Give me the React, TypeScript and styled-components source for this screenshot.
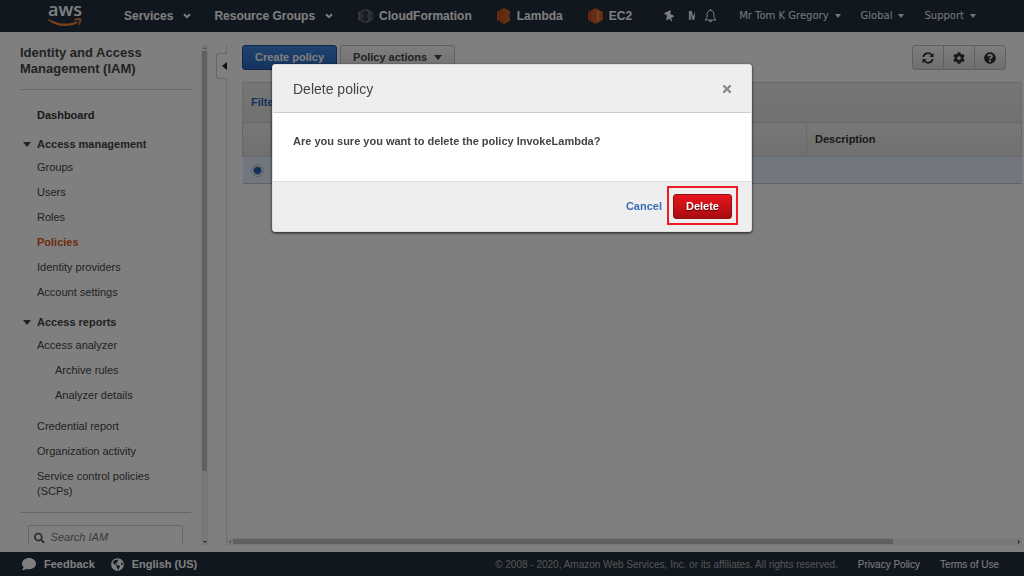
import React from "react";
import styled, { createGlobalStyle, css } from "styled-components";
import {
  FaCog,
  FaComment,
  FaGlobeAmericas,
  FaQuestionCircle,
  FaSearch,
  FaThumbtack,
  FaTimes,
} from "react-icons/fa";

const sans = `"Liberation Sans", Arial, Helvetica, sans-serif`;

const GlobalStyle = createGlobalStyle`
  * { box-sizing: border-box; }
  body {
    margin: 0;
    background: #fff;
    color: #444;
    font: 11px/15px ${sans};
  }
  button, input { font: inherit; color: inherit; }
  a { color: inherit; text-decoration: none; }
  ul { list-style: none; margin: 0; padding: 0; }
`;

const Shell = styled.div`
  display: grid;
  grid-template-rows: 32px minmax(0, 1fr) 24px;
  height: 100vh;
`;

/* ---------- top navigation ---------- */

const TopBar = styled.header`
  display: flex;
  align-items: center;
  background: #232f3e;
  color: #fff;
  white-space: nowrap;
`;

const Logo = styled.a`
  display: flex;
  flex-direction: column;
  align-items: center;
  align-self: flex-start;
  width: 34px;
  margin: 0 42px 0 48px;
  font: 600 18px/18px "Open Sans", sans-serif;
`;

const plainButton = css`
  display: flex;
  align-items: center;
  padding: 0;
  border: 0;
  background: none;
  cursor: pointer;
`;

const NavButton = styled.button`
  ${plainButton}
  gap: 10px;
  margin-right: 23px;
  font-size: 12px;
  font-weight: bold;
`;

const Shortcuts = styled.nav`
  display: flex;
  flex: 1;
  gap: 25px;
  margin-left: 2px;
`;

const Shortcut = styled.a`
  display: flex;
  align-items: center;
  gap: 6px;
  font-size: 12px;
  font-weight: bold;
`;

const Tools = styled.div`
  display: flex;
  align-items: center;
  gap: 9px;
  margin-right: 22px;
`;

const ClippedShortcut = styled.a`
  width: 7px;
  margin-left: 4px;
  overflow: hidden;
  font-size: 12px;
  font-weight: bold;
`;

const IconButton = styled.button`
  ${plainButton}
`;

const Account = styled.nav`
  display: flex;
  gap: 20px;
  margin-right: 48px;
`;

const AccountButton = styled.button`
  ${plainButton}
  gap: 6px;
  font: 10px/14px "DejaVu Sans", Verdana, sans-serif;
  color: #eee;
`;

const Caret = styled.span<{ $size?: number }>`
  border: ${(p) => p.$size ?? 3}px solid transparent;
  border-top: ${(p) => (p.$size ?? 3) + 1}px solid currentColor;
  border-bottom: 0;
`;

const TiltedPin = styled(FaThumbtack)`
  transform: rotate(-25deg);
`;

/* ---------- side navigation ---------- */

const Workspace = styled.div`
  display: grid;
  grid-template-columns: 208px 19px minmax(0, 1fr);
  padding: 13px 2px 7px 0;
  min-height: 0;
`;

const SideColumn = styled.aside`
  display: grid;
  grid-template-columns: minmax(0, 1fr) 7px;
  min-height: 0;
`;

const SideContent = styled.div`
  padding: 0 10px 0 20px;
  overflow: hidden;
`;

const SideTitle = styled.h1`
  margin: 0;
  padding-bottom: 12px;
  border-bottom: 1px solid #ccc;
  font-size: 13px;
  line-height: 16px;
`;

const SideNav = styled.nav`
  padding: 14px 0 8px;
  border-bottom: 1px solid #ccc;
`;

const Heading = styled.a`
  display: flex;
  align-items: center;
  height: 23px;
  padding-left: 17px;
  font-weight: bold;
  color: #333;
`;

const GroupToggle = styled.button`
  ${plainButton}
  gap: 6px;
  width: 100%;
  height: 22px;
  margin-top: 6px;
  padding-left: 3px;
  font-weight: bold;
`;

const List = styled.ul`
  margin-bottom: 6px;
  &:last-child { margin-bottom: 0; }
`;

const Entry = styled.a<{ $nested?: boolean; $active?: boolean }>`
  display: block;
  padding: 5px 20px 5px ${(p) => (p.$nested ? 35 : 17)}px;
  color: ${(p) => (p.$active ? "#e1571e" : "inherit")};
  font-weight: ${(p) => (p.$active ? "bold" : "normal")};
`;

const SearchBox = styled.label`
  display: flex;
  align-items: center;
  gap: 6px;
  height: 25px;
  margin: 12px 8px 0;
  padding: 0 5px;
  border: 1px solid #ccc;
  border-radius: 2px;
  color: #555;
`;

const SearchInput = styled.input`
  width: 100%;
  min-width: 0;
  padding: 0;
  border: 0;
  outline: 0;
  background: none;
  &::placeholder { color: #777; font-style: italic; opacity: 1; }
`;

/* ---------- scroll bars ---------- */

const Track = styled.div<{ $horizontal?: boolean }>`
  display: flex;
  flex-direction: ${(p) => (p.$horizontal ? "row" : "column")};
  align-items: center;
  justify-content: space-between;
  background: #f1f1f1;
  ${(p) => (p.$horizontal ? "height: 7px;" : "")}
`;

const Thumb = styled.div<{ $horizontal?: boolean; $share: number }>`
  background: #c1c1c1;
  ${(p) =>
    p.$horizontal
      ? css`width: ${p.$share}%; height: 5px; margin-right: auto;`
      : css`height: ${p.$share}%; width: 5px; margin-bottom: auto;`}
`;

const arrows = {
  up: "M3 2 5 4H1z",
  down: "M3 4 5 2H1z",
  left: "M2 3 4 1V5z",
  right: "M4 3 2 1V5z",
};

function Arrow({ to, dim }: { to: keyof typeof arrows; dim?: boolean }) {
  return (
    <svg width="6" height="6" viewBox="0 0 6 6" fill={dim ? "#a3a3a3" : "#505050"}>
      <path d={arrows[to]} />
    </svg>
  );
}

/* ---------- main panel ---------- */

const Splitter = styled.div`
  display: flex;
  flex-direction: column;
  align-items: flex-end;
  &::before { content: ""; height: 8px; border-right: 1px solid #ddd; }
  &::after { content: ""; flex: 1; border-right: 1px solid #ddd; }
`;

const Collapse = styled.button`
  ${plainButton}
  justify-content: flex-end;
  width: 11px;
  height: 26px;
  border: 1px solid #ccc;
  border-right: 0;
  border-radius: 3px 0 0 3px;
  color: #222;
`;

const Main = styled.main`
  display: flex;
  flex-direction: column;
  min-width: 0;
`;

const Content = styled.div`
  flex: 1;
  padding-left: 15px;
`;

const Toolbar = styled.div`
  display: flex;
  gap: 3px;
  margin-bottom: 12px;
`;

const Button = styled.button<{ $tone?: "primary" | "danger" }>`
  ${plainButton}
  gap: 7px;
  height: 25px;
  padding: 0 12px;
  border: 1px solid #c0c0c0;
  border-radius: 3px;
  background: linear-gradient(#fcfcfc, #e4e4e4);
  font-weight: bold;
  ${(p) =>
    p.$tone === "primary" &&
    css`
      border-color: #1f5291;
      background: linear-gradient(#3f84de, #2a69be);
      color: #fff;
    `}
  ${(p) =>
    p.$tone === "danger" &&
    css`
      border-color: #8c1010;
      background: linear-gradient(#e8141c, #a80c10);
      color: #fff;
      text-shadow: 0 1px 1px #500;
    `}
`;

const ButtonGroup = styled.div`
  display: flex;
  margin: 0 16px 0 auto;
`;

const GroupButton = styled.button`
  ${plainButton}
  justify-content: center;
  width: 32px;
  height: 25px;
  border: 1px solid #c0c0c0;
  background: linear-gradient(#fcfcfc, #dedede);
  color: #333;
  & + & { margin-left: -1px; }
  &:first-child { border-radius: 3px 0 0 3px; }
  &:last-child { border-radius: 0 3px 3px 0; }
`;

const FilterBar = styled.div`
  display: flex;
  align-items: center;
  height: 40px;
  padding: 0 8px;
  border: 1px solid #d4d4d4;
  border-bottom: 0;
  background: linear-gradient(#ececec, #e1e1df);
`;

const FilterButton = styled.button`
  ${plainButton}
  gap: 6px;
  color: #2663b8;
  font-weight: bold;
`;

const Table = styled.table`
  width: 100%;
  table-layout: fixed;
  border-collapse: collapse;
`;

const HeadCell = styled.th`
  height: 34px;
  padding: 0 8px;
  border: 1px solid #d0d0d0;
  background: linear-gradient(#f0f0ee, #dfdfdd);
  text-align: left;
  color: #333;
`;

const Cell = styled.td`
  height: 27px;
  padding: 0;
  border-bottom: 1px solid #bcc4d0;
  background: #e4efff;
  text-align: center;
`;

const Radio = styled.input`
  display: block;
  appearance: none;
  width: 13px;
  height: 13px;
  margin: 0 auto;
  border: 1px solid #bbb;
  border-radius: 50%;
  background: radial-gradient(circle, #2160b8 3px, #f8f8f8 5px);
`;

/* ---------- footer ---------- */

const Footer = styled.footer`
  display: flex;
  align-items: center;
  gap: 20px;
  padding: 0 25px 0 22px;
  background: #232f3e;
  color: #fff;
  font-size: 10px;
`;

const FooterButton = styled.button`
  ${plainButton}
  gap: 8px;
  margin-right: -4px;
  font-size: 11px;
  font-weight: bold;
`;

const Copyright = styled.span`
  margin-left: auto;
  color: #aaa;
`;

/* ---------- dialog ---------- */

const Backdrop = styled.div`
  position: fixed;
  inset: 0;
  display: flex;
  align-items: flex-start;
  justify-content: center;
  padding-top: 64px;
  background: rgba(0, 0, 0, 0.5);
`;

const Dialog = styled.section`
  width: 480px;
  max-width: 100%;
  border: 1px solid #ddd;
  border-radius: 3px;
  background: #fff;
  box-shadow: 0 1px 3px rgba(0, 0, 0, 0.8);
  overflow: hidden;
`;

const DialogHead = styled.header`
  display: flex;
  align-items: center;
  justify-content: space-between;
  height: 48px;
  padding: 0 18px 0 20px;
  border-bottom: 1px solid #ccc;
  background: #eee;
`;

const DialogTitle = styled.h2`
  margin: 0;
  font-size: 14px;
  line-height: 18px;
  font-weight: normal;
`;

const CloseButton = styled(IconButton)`
  color: #888;
`;

const Question = styled.p`
  margin: 0;
  padding: 21px 20px 32px;
  font-weight: bold;
`;

const DialogFoot = styled.footer`
  display: flex;
  align-items: center;
  justify-content: flex-end;
  gap: 5px;
  height: 50px;
  padding-right: 13px;
  border-top: 1px solid #ddd;
  background: #eee;
`;

const CancelButton = styled.button`
  ${plainButton}
  color: #3a6cb8;
  font-weight: bold;
`;

const Highlight = styled.div`
  margin-bottom: 2px;
  padding: 6px 4px 4px;
  border: 2px solid #ed1c24;
`;

/* ---------- drawings ---------- */

const Smile = () => (
  <svg width="34" height="9" viewBox="0 0 34 9" fill="#f58536">
    <path d="M.5 .9C10 6.500 21 6.800 29 3.300L30 4.800C21 10 8 8.700.2 2.200z" />
    <path d="M26 1.500C28.500-.2 32.500.2 33.200.9 33.700 2 32.700 5.500 30.700 7.500L30 7.200C31 5.200 31.800 3 31.400 2.400 30.700 1.900 28 2 26.100 2.400z" />
  </svg>
);

const Chevron = () => (
  <svg width="8" height="6" viewBox="0 0 8 6" fill="none" stroke="currentColor" strokeWidth="2">
    <path d="M1 1.200 4 4.200 7 1.200" />
  </svg>
);

const CloudFormationIcon = () => (
  <svg width="15" height="16" viewBox="0 0 15 16">
    <path d="M0 4 2.200 3V13L0 12z" fill="#6d7278" />
    <path d="M2.200 3 7 .5V3.200L4.800 4.300V11.700L7 12.800V15.500L2.200 13z" fill="#565c64" />
    <path d="M8 .5 12.800 3V13L8 15.500V12.800L10.200 11.700V4.300L8 3.200z" fill="#656a72" />
    <path d="M12.800 3 15 4V12L12.800 13z" fill="#555a62" />
    <path d="M6 6V10M9 6V10" stroke="#7a5148" />
  </svg>
);

const LambdaIcon = () => (
  <svg width="14" height="16" viewBox="0 0 14 16">
    <path d="M0 4 7 0V16L0 12z" fill="#cf5a24" />
    <path d="M7 0 13 3.200V6.800L11 6V10L13 9.200V12.800L7 16z" fill="#e0662b" />
    <path d="M2.500 4V13M4.800 3V14M7.200 2V15M9.400 3V13" stroke="#7a3a20" strokeWidth=".9" strokeDasharray="1 1" />
    <path d="M11 7 13 7.600V8.600L11 9.200z" fill="#cf5a24" />
  </svg>
);

const Ec2Icon = () => (
  <svg width="15" height="16" viewBox="0 0 15 16">
    <path d="M0 4 2.500 2.800V13.200L0 12z" fill="#c9531f" />
    <path d="M2.500 2.800 7.500 0V16L2.500 13.200z" fill="#d96028" />
    <path d="M7.500 0 12.500 2.800V13.200L7.500 16z" fill="#e0662b" />
    <path d="M12.500 2.800 15 4V12L12.500 13.200z" fill="#c9531f" />
    <path d="M2.600 3V13M5 3V14" stroke="#8a4020" strokeWidth=".8" strokeDasharray="1 1" />
    <path d="M9.500 4V13M12.200 4V13" stroke="#ffb88a" strokeWidth=".9" strokeDasharray="1 1.500" />
  </svg>
);

const BellIcon = () => (
  <svg width="13" height="14" viewBox="0 0 13 14" fill="none" stroke="currentColor">
    <path d="M6.500 1.500C4.200 1.500 3.200 3.300 3.200 5.200 3.200 8 2.700 9.300 1 11H12C10.300 9.300 9.800 8 9.800 5.200 9.800 3.300 8.800 1.500 6.500 1.500z" strokeLinejoin="round" />
    <path d="M6.500 0V1.500" />
    <path d="M4.800 11.500C5 13.700 8 13.700 8.200 11.500z" fill="currentColor" stroke="none" />
  </svg>
);

const RefreshIcon = () => (
  <svg width="12" height="12" viewBox="0 0 12 12" fill="none" stroke="currentColor" strokeWidth="1.700">
    <path d="M1.300 5A4.700 4.700 0 0 1 9.600 3" />
    <path d="M10.700 7A4.700 4.700 0 0 1 2.400 9" />
    <path d="M11.500.8V5H7.300zM.5 11.200V7H4.700z" fill="currentColor" stroke="none" />
  </svg>
);

const CollapseArrow = () => (
  <svg width="5" height="8" viewBox="0 0 5 8" fill="currentColor">
    <path d="M5 0V8L0 4z" />
  </svg>
);

/* ---------- page ---------- */

type Item = { label: string; nested?: boolean; active?: boolean };

const management: Item[] = [
  { label: "Groups" },
  { label: "Users" },
  { label: "Roles" },
  { label: "Policies", active: true },
  { label: "Identity providers" },
  { label: "Account settings" },
];
const analyzer: Item[] = [
  { label: "Access analyzer" },
  { label: "Archive rules", nested: true },
  { label: "Analyzer details", nested: true },
];
const reports: Item[] = [
  { label: "Credential report" },
  { label: "Organization activity" },
  { label: "Service control policies (SCPs)" },
];

function Entries({ items }: { items: Item[] }) {
  return (
    <List>
      {items.map((item) => (
        <li key={item.label}>
          <Entry href="#" $nested={item.nested} $active={item.active}>
            {item.label}
          </Entry>
        </li>
      ))}
    </List>
  );
}

export default function App() {
  return (
    <>
      <GlobalStyle />
      <Shell>
        <TopBar>
          <Logo href="#">
            aws
            <Smile />
          </Logo>
          <NavButton>Services <Chevron /></NavButton>
          <NavButton>Resource Groups <Chevron /></NavButton>
          <Shortcuts>
            <Shortcut href="#"><CloudFormationIcon />CloudFormation</Shortcut>
            <Shortcut href="#"><LambdaIcon />Lambda</Shortcut>
            <Shortcut href="#"><Ec2Icon />EC2</Shortcut>
          </Shortcuts>
          <Tools>
            <IconButton aria-label="Pin shortcuts"><TiltedPin size={11} /></IconButton>
            <ClippedShortcut href="#">M</ClippedShortcut>
            <IconButton aria-label="Notifications"><BellIcon /></IconButton>
          </Tools>
          <Account>
            <AccountButton>Mr Tom K Gregory <Caret /></AccountButton>
            <AccountButton>Global <Caret /></AccountButton>
            <AccountButton>Support <Caret /></AccountButton>
          </Account>
        </TopBar>

        <Workspace>
          <SideColumn>
            <SideContent>
              <SideTitle>Identity and Access Management (IAM)</SideTitle>
              <SideNav>
                <Heading href="#">Dashboard</Heading>
                <GroupToggle><Caret $size={4} />Access management</GroupToggle>
                <Entries items={management} />
                <GroupToggle><Caret $size={4} />Access reports</GroupToggle>
                <Entries items={analyzer} />
                <Entries items={reports} />
              </SideNav>
              <SearchBox>
                <FaSearch size={12} />
                <SearchInput type="search" placeholder="Search IAM" aria-label="Search IAM" />
              </SearchBox>
            </SideContent>
            <Track>
              <Arrow to="up" dim />
              <Thumb $share={84} />
              <Arrow to="down" />
            </Track>
          </SideColumn>

          <Splitter>
            <Collapse aria-label="Collapse navigation"><CollapseArrow /></Collapse>
          </Splitter>

          <Main>
            <Content>
              <Toolbar>
                <Button $tone="primary">Create policy</Button>
                <Button>Policy actions <Caret $size={4} /></Button>
                <ButtonGroup>
                  <GroupButton aria-label="Refresh"><RefreshIcon /></GroupButton>
                  <GroupButton aria-label="Settings"><FaCog size={12} /></GroupButton>
                  <GroupButton aria-label="Help"><FaQuestionCircle size={12} /></GroupButton>
                </ButtonGroup>
              </Toolbar>
              <FilterBar>
                <FilterButton>Filter policies <Caret /></FilterButton>
              </FilterBar>
              <Table>
                <colgroup>
                  <col width="29" />
                  <col />
                  <col width="215" />
                </colgroup>
                <thead>
                  <tr>
                    <HeadCell />
                    <HeadCell />
                    <HeadCell scope="col">Description</HeadCell>
                  </tr>
                </thead>
                <tbody>
                  <tr>
                    <Cell>
                      <Radio type="radio" name="policy" defaultChecked aria-label="InvokeLambda" />
                    </Cell>
                    <Cell />
                    <Cell />
                  </tr>
                </tbody>
              </Table>
            </Content>
            <Track $horizontal>
              <Arrow to="left" dim />
              <Thumb $horizontal $share={83} />
              <Arrow to="right" />
            </Track>
          </Main>
        </Workspace>

        <Footer>
          <FooterButton><FaComment size={14} />Feedback</FooterButton>
          <FooterButton><FaGlobeAmericas size={13} />English (US)</FooterButton>
          <Copyright>
            © 2008 - 2020, Amazon Web Services, Inc. or its affiliates. All rights reserved.
          </Copyright>
          <a href="#">Privacy Policy</a>
          <a href="#">Terms of Use</a>
        </Footer>
      </Shell>

      <Backdrop>
        <Dialog role="dialog" aria-modal="true" aria-labelledby="dialog-title">
          <DialogHead>
            <DialogTitle id="dialog-title">Delete policy</DialogTitle>
            <CloseButton aria-label="Close"><FaTimes size={12} /></CloseButton>
          </DialogHead>
          <Question>Are you sure you want to delete the policy InvokeLambda?</Question>
          <DialogFoot>
            <CancelButton>Cancel</CancelButton>
            <Highlight>
              <Button $tone="danger">Delete</Button>
            </Highlight>
          </DialogFoot>
        </Dialog>
      </Backdrop>
    </>
  );
}
